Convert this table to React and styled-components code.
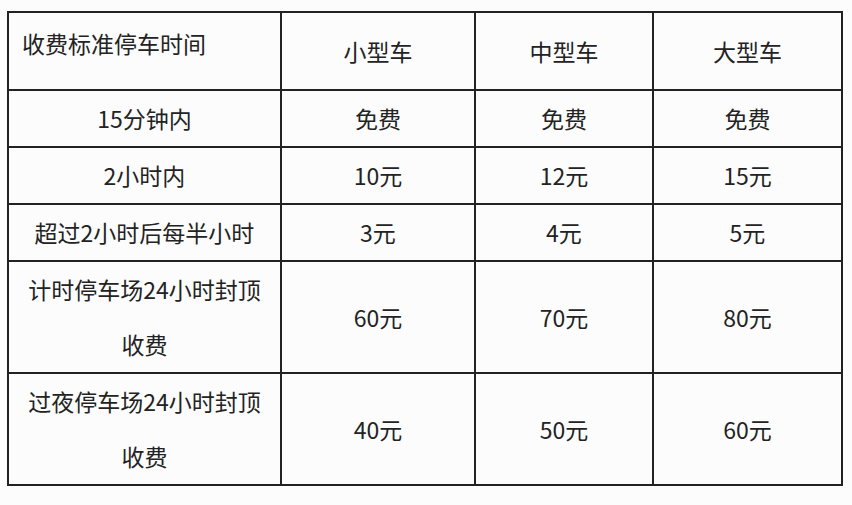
import React from "react";
import styled, { createGlobalStyle } from "styled-components";

const GlobalStyle = createGlobalStyle`
  html, body {
    margin: 0;
    padding: 0;
    background: #fcfcfc;
  }
  body {
    font-family: "Noto Sans CJK SC", "Noto Sans", sans-serif;
    color: #232323;
  }
`;

const Page = styled.div`
  padding: 11px 0 0 7px;
`;

const Table = styled.table`
  width: 834px;
  border-collapse: collapse;
  table-layout: fixed;
  border: 2px solid #222;
`;

const Row = styled.tr`
  height: ${(p) => p.$h}px;
`;

const Cell = styled.td`
  border: 2px solid #222;
  padding: 0;
  text-align: center;
  vertical-align: middle;
  font-size: 23px;
  line-height: 55px;
  color: #232323;
`;

const CornerCell = styled(Cell)`
  text-align: left;
  vertical-align: top;
  padding: 13px 0 0 13px;
  line-height: 34px;
`;

const HeadCell = styled(Cell)`
  line-height: 40px;
`;

const Label = styled.span`
  display: inline-block;
  padding: 0 14px;
`;

const widths = [273, 194, 178, 189];

const rows = [
  { h: 56, label: "15分钟内", vals: ["免费", "免费", "免费"] },
  { h: 56, label: "2小时内", vals: ["10元", "12元", "15元"] },
  { h: 56, label: "超过2小时后每半小时", vals: ["3元", "4元", "5元"] },
  { h: 111, label: "计时停车场24小时封顶收费", vals: ["60元", "70元", "80元"] },
  { h: 111, label: "过夜停车场24小时封顶收费", vals: ["40元", "50元", "60元"] },
];

export default function App() {
  return (
    <>
      <GlobalStyle />
      <Page>
        <Table>
          <colgroup>
            {widths.map((w, i) => (
              <col key={i} style={{ width: w }} />
            ))}
          </colgroup>
          <tbody>
            <Row $h={78}>
              <CornerCell>收费标准停车时间</CornerCell>
              <HeadCell>小型车</HeadCell>
              <HeadCell>中型车</HeadCell>
              <HeadCell>大型车</HeadCell>
            </Row>
            {rows.map((r) => (
              <Row key={r.label} $h={r.h}>
                <Cell>
                  <Label>{r.label}</Label>
                </Cell>
                {r.vals.map((v, i) => (
                  <Cell key={i}>{v}</Cell>
                ))}
              </Row>
            ))}
          </tbody>
        </Table>
      </Page>
    </>
  );
}
